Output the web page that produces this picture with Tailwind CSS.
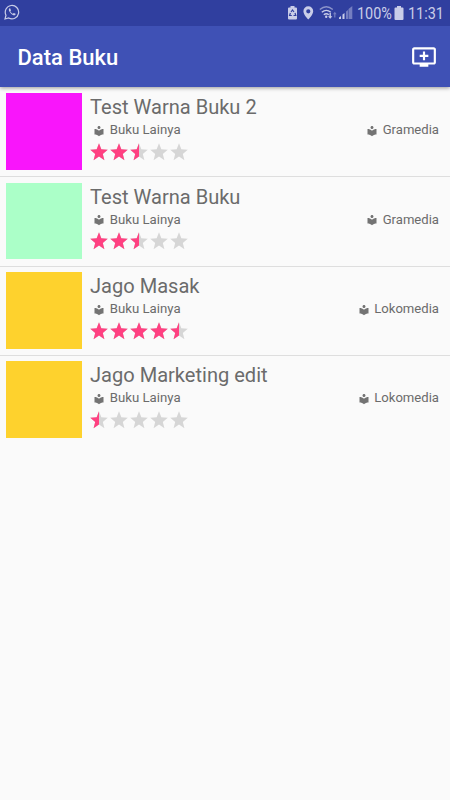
<!DOCTYPE html>
<html lang="id">
<head>
<meta charset="utf-8">
<title>Data Buku</title>
<script src="https://cdn.jsdelivr.net/npm/@tailwindcss/browser@4"></script>
</head>
<body class="bg-[#fafafa] font-[Roboto,sans-serif] w-[450px] h-[800px] overflow-hidden">
<svg class="hidden">
  <symbol id="star" viewBox="0 0 24 24"><path d="M12 17.500L18.500 21.800l-1.900-7.500L22.500 9.300l-7.700-.6L12 1.500 9.200 8.700 1.500 9.300l5.900 5L5.500 21.800z"/></symbol>
  <symbol id="reader" viewBox="0 0 24 24"><path d="M12 11.550C9.640 9.350 6.480 8 3 8v11c3.480 0 6.640 1.350 9 3.550 2.360-2.190 5.520-3.550 9-3.550V8c-3.480 0-6.640 1.350-9 3.550zM12 8c1.660 0 3-1.340 3-3s-1.340-3-3-3-3 1.340-3 3 1.340 3 3 3z"/></symbol>
</svg>
<header class="relative h-[87px] bg-[#3f51b5] shadow-[0_1px_4px_rgba(0,0,0,0.4)]">
  <div class="h-[26px] bg-[#303f9f] flex items-center justify-between pl-1 pr-[7px] text-[#c9cde8]">
    <svg class="w-4 h-4 mb-[2px]" viewBox="0 0 16 16" fill="none" stroke="currentColor" stroke-width="1.2"><path d="M1 15l1-3.800A6.700 6.700 0 1 1 4.700 14z"/><path d="M5.400 4.300c-1.200 1.200-.5 3 1.300 4.900s3.500 2.700 4.700 1.600l.2-1-1.800-.9-.9.900c-1-.3-2.200-1.500-2.600-2.600l.7-.8-.7-1.900z" fill="currentColor" stroke="none"/></svg>
    <div class="flex items-center h-[26px]">
      <svg class="w-[90px] h-[26px] mr-[-19px]" viewBox="0 0 90 26" fill="currentColor">
        <path d="M4.500 6h4v1.500H10q1 0 1 1V18.500q0 1-1 1H3q-1 0-1-1V8.500q0-1 1-1h1.500z"/>
        <path d="M5 12l1.500-2 1.500 2M9 13l.8 2.500H7.500M5.800 15.500H3.600L4.400 13" fill="none" stroke="#303f9f" stroke-width="1.200"/>
        <path fill-rule="evenodd" d="M22.300 6.300a4.900 4.900 0 0 0-4.900 4.900c0 3.500 4.900 8.200 4.900 8.200s4.900-4.700 4.900-8.200a4.900 4.900 0 0 0-4.900-4.900zm0 2.900a2.100 2.100 0 1 1 0 4.200 2.100 2.100 0 0 1 0-4.200z"/>
        <g fill="none" stroke="currentColor" stroke-width="1.400"><path d="M33.800 9.500q6.500-5.500 13 0" opacity=".6"/><path d="M35.800 12.200q4.500-3.700 9 0"/><path d="M37.800 14.700q2.500-2 5 0"/></g>
        <circle cx="40.200" cy="16.800" r="1.200"/>
        <path d="M43.500 13v3.200h-1.500l2.200 2.500 2.200-2.500h-1.500V13z"/><path d="M48.200 17.500v-3.200h-1.200l1.800-2.500 1.800 2.500h-1.200v3.200z" opacity=".45"/>
        <path d="M53 19v-1.500l2-1.500v3zM56.500 19v-4.500l2-1.500v6z"/><path d="M60 19v-7.500l2-1.500v9zM62.500 19V9l3.800-3v13z" opacity=".45"/>
      </svg>
      <span class="text-[16px] leading-[27px] w-[36px] whitespace-nowrap"><span class="inline-block origin-left scale-x-[.9]">100%</span></span>
      <svg class="w-[10px] h-[14px] ml-[1px] mr-[4px] mb-[1px]" viewBox="0 0 10 14" fill="currentColor"><path d="M3 0h4v1.500h1.500q1 0 1 1v10.500q0 1-1 1h-7q-1 0-1-1V2.500q0-1 1-1H3z"/></svg>
      <span class="text-[16px] leading-[27px] w-[35px] whitespace-nowrap"><span class="inline-block origin-left scale-x-[.9]">11:31</span></span>
    </div>
  </div>
  <div class="h-[61px] flex items-center justify-between pl-[17.500px] pr-[13px] text-white">
    <h1 class="text-[22px] font-medium leading-[26px] mt-[2px]">Data Buku</h1>
    <svg class="w-[26px] h-[26px] mt-[1px]" viewBox="0 0 24 24" fill="currentColor"><path d="M21 3H3c-1.110 0-2 .89-2 2v12c0 1.100.89 2 2 2h5v2h8v-2h5c1.100 0 1.990-.9 1.990-2L23 5c0-1.110-.9-2-2-2zm0 14H3V5h18v12zm-5-7v2h-3v3h-2v-3H8v-2h3V7h2v3h3z"/></svg>
  </div>
</header>
<main id="list"></main>
<script>
const books = [
  ["Test Warna Buku 2", "Gramedia", 2.5, "#f915fb"],
  ["Test Warna Buku", "Gramedia", 2.5, "#abffc8"],
  ["Jago Masak", "Lokomedia", 4.5, "#fed22d"],
  ["Jago Marketing edit", "Lokomedia", 0.5, "#fed22d"]
];
const five = '<svg class="w-5 h-5 shrink-0"><use href="#star"/></svg>'.repeat(5);
document.getElementById("list").innerHTML = books.map(([title, publisher, rating, color], i) => `
  <article class="h-[89.400px] flex pt-[5.400px] pl-[6px] pr-[11px] border-[#dedede] ${i < 3 ? "border-b-[1.500px]" : ""} ${i < 1 ? "mt-[0.900px]" : ""}">
    <div class="w-[76.400px] h-[76.500px] shrink-0" style="background:${color}"></div>
    <div class="flex-1 pl-[7.400px] text-[#6b6b6b]">
      <h2 class="text-[21px] leading-[28px] h-[28px] whitespace-nowrap origin-left scale-x-[.955]">${title}</h2>
      <div class="flex justify-between text-[13.200px] leading-[17px] h-[17px]">
        <span class="flex items-center pl-[3px]"><svg class="w-3 h-3 mr-[5px] mt-[2px] fill-[#737373]"><use href="#reader"/></svg>Buku Lainya</span>
        <span class="flex items-center text-[13.100px]"><svg class="w-3 h-3 mr-[4.600px] mt-[2px] fill-[#737373]"><use href="#reader"/></svg>${publisher}</span>
      </div>
      <div class="relative w-[100px] h-5 mt-[3.500px] ml-[-0.600px]">
        <div class="flex fill-[#d6d6d6]">${five}</div>
        <div class="absolute left-0 top-0 h-5 flex overflow-hidden fill-[#ff4081]" style="width:${rating * 20}px">${five}</div>
      </div>
    </div>
  </article>`).join("");
</script>
</body>
</html>
